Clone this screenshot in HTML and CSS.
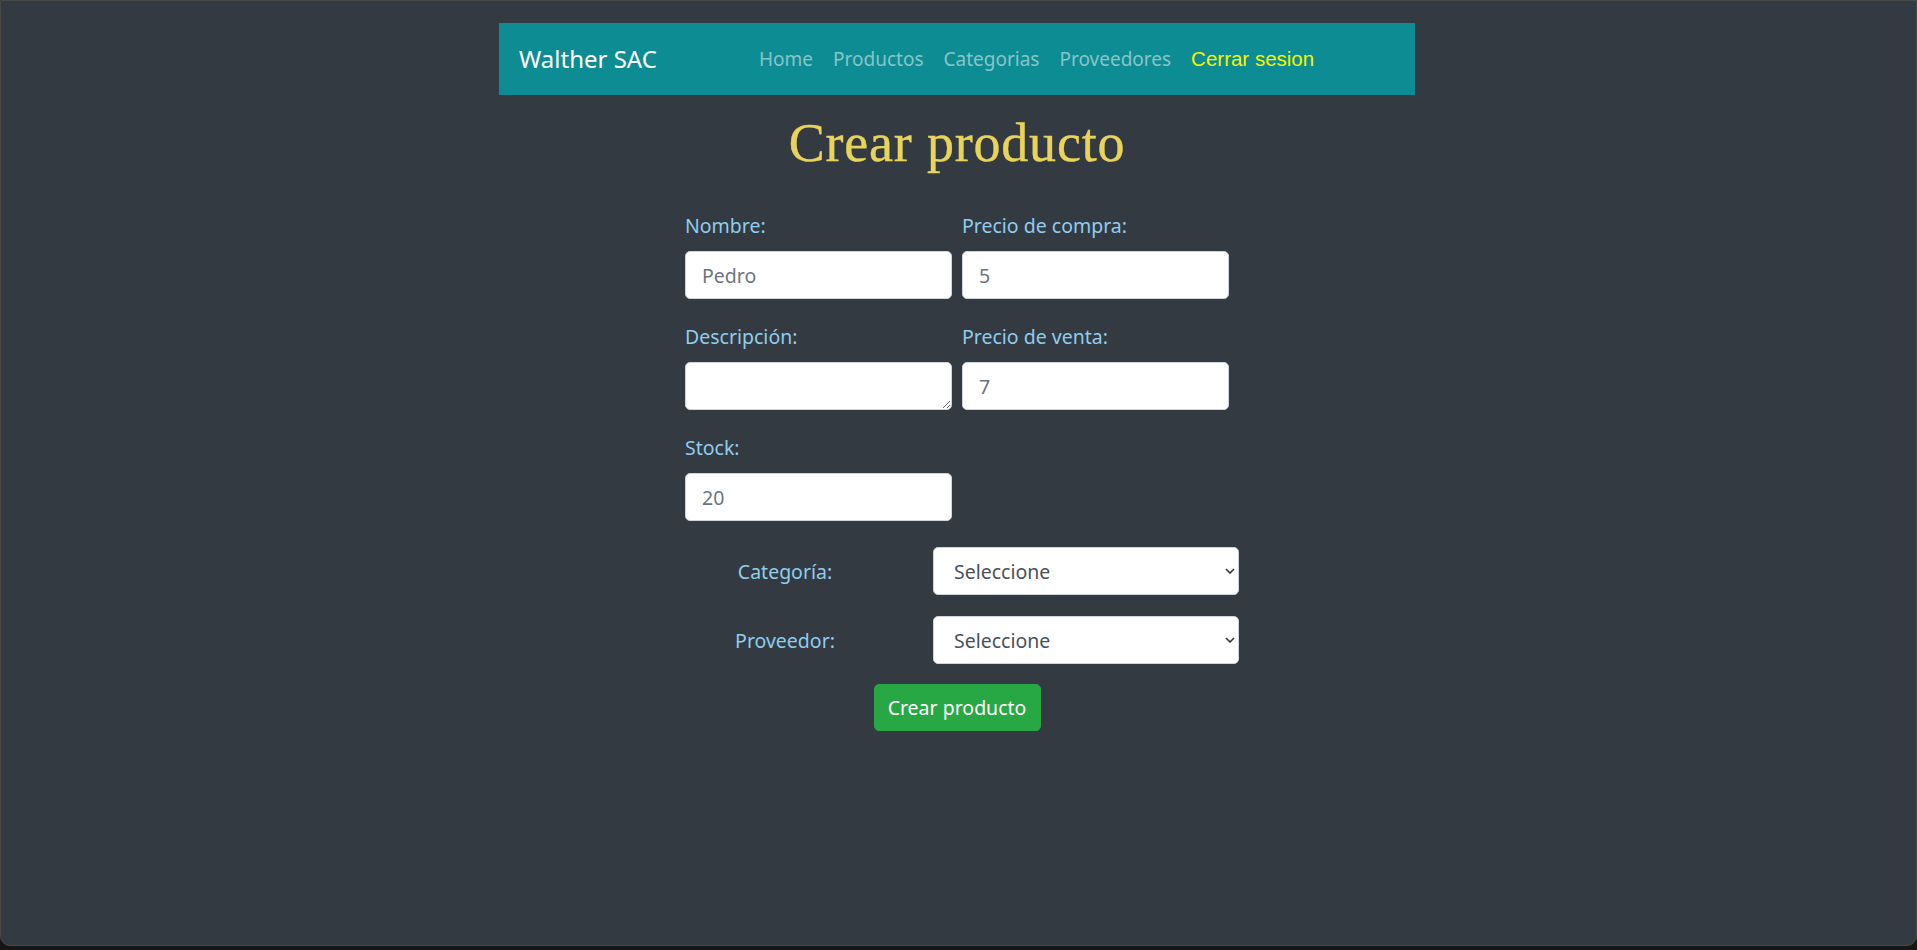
FILE: index.html
```html
<!DOCTYPE html>
<html lang="es">
<head>
<meta charset="utf-8">
<title>Crear producto</title>
<link rel="stylesheet" href="styles.css">
</head>
<body>
<div class="frame">
  <nav class="navbar">
    <span class="brand">Walther SAC</span>
    <ul class="nav">
      <li><a class="nav-link" href="#">Home</a></li>
      <li><a class="nav-link" href="#">Productos</a></li>
      <li><a class="nav-link" href="#">Categorias</a></li>
      <li><a class="nav-link" href="#">Proveedores</a></li>
      <li><a class="nav-link logout" href="#">Cerrar sesion</a></li>
    </ul>
  </nav>

  <h1 class="title">Crear producto</h1>

  <form class="form">
    <div class="grid">
      <div class="group">
        <label class="label">Nombre:</label>
        <input class="control" type="text" value="Pedro">
      </div>
      <div class="group">
        <label class="label">Precio de compra:</label>
        <input class="control" type="text" value="5">
      </div>
      <div class="group">
        <label class="label">Descripción:</label>
        <textarea class="control area"></textarea>
      </div>
      <div class="group">
        <label class="label">Precio de venta:</label>
        <input class="control" type="text" value="7">
      </div>
      <div class="group">
        <label class="label">Stock:</label>
        <input class="control" type="text" value="20">
      </div>
    </div>

    <div class="select-row">
      <label class="select-label">Categoría:</label>
      <div class="select-wrap">
        <select class="select"><option>Seleccione</option></select>
        <svg class="chevron" width="10" height="6" viewBox="0 0 10 6"><polyline points="1,1 5,5 9,1" fill="none" stroke="#333" stroke-width="1.6"/></svg>
      </div>
    </div>
    <div class="select-row">
      <label class="select-label">Proveedor:</label>
      <div class="select-wrap">
        <select class="select"><option>Seleccione</option></select>
        <svg class="chevron" width="10" height="6" viewBox="0 0 10 6"><polyline points="1,1 5,5 9,1" fill="none" stroke="#333" stroke-width="1.6"/></svg>
      </div>
    </div>

    <div class="actions">
      <button class="btn" type="button">Crear producto</button>
    </div>
  </form>
</div>
</body>
</html>
```

FILE: styles.css
```css
* { box-sizing: border-box; }

html, body {
  margin: 0;
  padding: 0;
  background: #151515;
}

body {
  font-family: "Noto Sans", "Open Sans", sans-serif;
}

.frame {
  height: 946px;
  border: 1px solid #4a4a44;
  border-radius: 0 0 10px 10px;
  background: #343a41;
  padding-top: 22px;
  padding-right: 3px;
}

.navbar {
  width: 916px;
  height: 72px;
  margin: 0 auto;
  background: #0e8c93;
  display: flex;
  align-items: center;
  padding: 0 20px;
}

.brand {
  color: #ffffff;
  font-size: 24px;
  width: 230px;
  padding-bottom: 2px;
}

.nav {
  list-style: none;
  margin: 0;
  padding: 0;
  display: flex;
  align-items: center;
}

.nav-link {
  display: block;
  padding: 0 10px;
  font-size: 19px;
  color: #86c5c9;
  text-decoration: none;
}

.logout {
  font-family: "Liberation Sans", Arial, sans-serif;
  font-size: 20.5px;
  color: #f5f500;
}

.title {
  margin: 8px 0 0;
  text-align: center;
  font-family: "Liberation Serif", "Times New Roman", serif;
  font-weight: normal;
  font-size: 54px;
  letter-spacing: 0.8px;
  line-height: 80px;
  color: #e9d45b;
  -webkit-text-stroke: 0.4px #e9d45b;
}

.form {
  width: 544px;
  margin: 28px auto 0;
}

.grid {
  display: grid;
  grid-template-columns: 267px 267px;
  column-gap: 10px;
  row-gap: 23px;
}

.group {
  display: flex;
  flex-direction: column;
}

.label {
  color: #8fcdee;
  font-size: 19.5px;
  line-height: 30px;
  margin-bottom: 10px;
}

.control {
  width: 267px;
  height: 48px;
  border: 1px solid #ced4da;
  border-radius: 5px;
  background: #ffffff;
  padding: 0 16px;
  font-family: "Noto Sans", "Open Sans", sans-serif;
  font-size: 19.5px;
  color: #6c757d;
}

.area {
  display: block;
  resize: vertical;
  padding-top: 8px;
}

.select-row {
  display: flex;
  align-items: center;
  margin-top: 21px;
  width: 560px;
}

.grid + .select-row { margin-top: 26px; }

.select-label {
  width: 200px;
  text-align: center;
  color: #8fcdee;
  font-size: 19.5px;
  margin-right: 48px;
}

.select-wrap {
  position: relative;
  width: 306px;
  height: 48px;
}

.select {
  appearance: none;
  -webkit-appearance: none;
  width: 306px;
  height: 48px;
  border: 1px solid #ced4da;
  border-radius: 5px;
  background: #ffffff;
  padding: 0 30px 0 20px;
  font-family: "Noto Sans", "Open Sans", sans-serif;
  font-size: 19.5px;
  color: #495057;
}

.chevron {
  position: absolute;
  right: 4px;
  top: 21px;
}

.actions {
  display: flex;
  justify-content: center;
  margin-top: 20px;
}

.btn {
  height: 47px;
  width: 167px;
  border: 1px solid #28a745;
  border-radius: 5px;
  background: #28a745;
  color: #ffffff;
  font-family: "Noto Sans", "Open Sans", sans-serif;
  font-size: 19.5px;
  padding: 0;
}
```
